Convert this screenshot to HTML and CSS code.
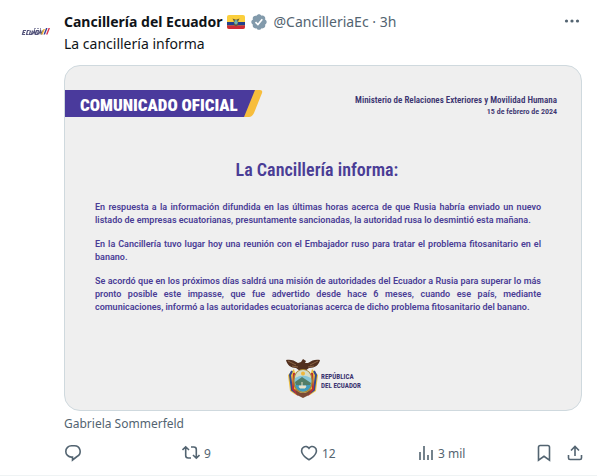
FILE: index.html
```html
<!DOCTYPE html>
<html lang="es">
<head>
<meta charset="utf-8">
<meta name="viewport" content="width=device-width, initial-scale=1">
<title>Cancillería del Ecuador</title>
<link rel="stylesheet" href="styles.css">
</head>
<body>
<article class="post">
  <a class="avatar" href="#" aria-label="Cancillería del Ecuador">
    <svg viewBox="0 0 38 38" width="38" height="38" aria-hidden="true">
      <g fill="none" stroke="#55557c" stroke-width="1.200">
        <path d="M8 22.500H5.500L6.500 18.500H9M6 20.500h2M12.500 18.500H10.500l-1 4h2M13.500 18.500l-1 4h2l1-4M15.500 22.500l2-4 .5 4M19.500 18.500l-1 4h2l1-4zM21.500 22.500l2-4 .5 4M24.500 22.500l1-4"/>
        <path d="M17 16.500h7" stroke-dasharray="2 1" opacity=".6"/>
      </g>
      <path d="M24 22.500l2.500-5.500H28l-2.500 5.500z" fill="#efb52f"/>
      <path d="M26.500 22.500l2.500-6.500h1.500L28 22.500z" fill="#3c3c92"/>
      <path d="M29 22.500l2.500-6.500H33l-2.500 6.500z" fill="#dc344d"/>
    </svg>
  </a>
  <div class="body">
    <header class="byline">
      <a class="name" href="#">Cancillería del Ecuador</a>
      <svg class="flag" viewBox="0 0 18 14" width="18" height="14" role="img" aria-label="Ecuador">
        <rect width="18" height="14" rx="2" fill="#fbcf3c"/>
        <path d="M0 7h18v3.500H0z" fill="#22408c"/>
        <path d="M0 10.500h18V12a2 2 0 0 1-2 2H2a2 2 0 0 1-2-2z" fill="#ce2b37"/>
        <path d="M5.500 3.500L9 4.700l3.500-1.200-1.300 2.700-.4 4L9 11.500l-1.800-1.300-.4-4z" fill="#665b3a"/>
        <ellipse cx="9" cy="7.300" rx="1.700" ry="2.300" fill="#70b6b4"/>
      </svg>
      <svg class="verified" viewBox="0 0 22 22" width="18" height="18" role="img" aria-label="Cuenta verificada">
        <path fill="#829aab" d="M20.400 11c0-1.400-.8-2.600-2-3.200.5-1.300.2-2.700-.7-3.600-1-1-2.400-1.200-3.600-.8C13.500 2.200 12.300 1.500 11 1.500S8.500 2.200 7.900 3.400c-1.300-.4-2.600-.1-3.600.8s-1.200 2.300-.7 3.600C2.400 8.400 1.600 9.600 1.600 11s.8 2.600 2 3.200c-.5 1.300-.3 2.600.7 3.600 1 1 2.300 1.200 3.600.8.600 1.200 1.800 1.900 3.100 1.900s2.500-.7 3.100-1.900c1.300.4 2.600.2 3.600-.8.900-1 1.200-2.300.7-3.600 1.200-.6 2-1.800 2-3.200z"/>
        <path d="M6.700 11.200l3 3 5.300-6.500" fill="none" stroke="#fff" stroke-width="2"/>
      </svg>
      <span class="meta"><a href="#">@CancilleriaEc</a> · <time>3h</time></span>
      <button class="icon-button more" type="button" aria-label="Más opciones">
        <svg viewBox="0 0 16 16" width="16" height="16" fill="#536471"><circle cx="2.500" cy="7" r="1.600"/><circle cx="8" cy="7" r="1.600"/><circle cx="13.500" cy="7" r="1.600"/></svg>
      </button>
    </header>
    <p class="message">La cancillería informa</p>
    <section class="release">
      <div class="release-head">
        <div class="banner">
          <svg class="banner-shape" viewBox="0 0 198 27" preserveAspectRatio="none" aria-hidden="true">
            <path d="M0 0h191l-11 27H0z" fill="#4a3a9c"/>
            <path d="M190 0h5q3 0 2 3l-8 20q-2 4-5 4h-5z" fill="#f7bd3c"/>
          </svg>
          <strong class="banner-text">COMUNICADO OFICIAL</strong>
        </div>
        <div class="issuer">
          <p class="ministry">Ministerio de Relaciones Exteriores y Movilidad Humana</p>
          <p class="date">15 de febrero de 2024</p>
        </div>
      </div>
      <h2 class="title">La Cancillería informa:</h2>
      <div class="copy">
        <p>En respuesta a la información difundida en las últimas horas acerca de que Rusia habría enviado un nuevo listado de empresas ecuatorianas, presuntamente sancionadas, la autoridad rusa lo desmintió esta mañana.</p>
        <p>En la Cancillería tuvo lugar hoy una reunión con el Embajador ruso para tratar el problema fitosanitario en el banano.</p>
        <p>Se acordó que en los próximos días saldrá una misión de autoridades del Ecuador a Rusia para superar lo más pronto posible este impasse, que fue advertido desde hace 6 meses, cuando ese país, mediante comunicaciones, informó a las autoridades ecuatorianas acerca de dicho problema fitosanitario del banano.</p>
      </div>
      <div class="seal">
        <svg viewBox="0 0 36 40" width="36" height="40" aria-hidden="true">
          <path d="M9 11L3 17l2 16 6 4 4-3zM27 11l6 6-2 16-6 4-4-3z" fill="#efc03c"/>
          <path d="M7 13l-2 4 2 15 4 3M29 13l2 4-2 15-4 3" fill="none" stroke="#334a91" stroke-width="2"/>
          <path d="M9 15L8 31l5 6M27 15l1 16-5 6" fill="none" stroke="#bc3036" stroke-width="2"/>
          <path d="M1 2c4-1 8 0 12 3l3-1 2-3 3 2-1 2 3 0c4-3 8-4 12-3-1 5-5 8-11 8l-4 3h-5l-4-3C6 10 2 7 1 2z" fill="#52301f"/>
          <path d="M3 3l8 4M33 3l-8 4M7 8l6 1M29 8l-6 1" stroke="#8c6545" stroke-width="1"/>
          <path d="M10 31q8 8 16 0l-2 6-6 3-6-3z" fill="#7b4935"/>
          <ellipse cx="18" cy="23" rx="10" ry="12" fill="#a88734"/>
          <ellipse cx="18" cy="23" rx="8.500" ry="10.500" fill="#86c5d8"/>
          <path d="M10 20q8-5 16 0-1-8-8-8t-8 8z" fill="#d4dcc8"/>
          <circle cx="18" cy="15.500" r="2" fill="#efb63c"/>
          <path d="M10 24l7-5 3 2 6 4-1 3H11z" fill="#517e68"/>
          <path d="M10 27h16q-2 6.500-8 6.500T10 27z" fill="#3f9bbc"/>
          <path d="M14 28h7l-1 2h-5zM17 24v4" fill="#e9e1c6" stroke="#e9e1c6"/>
        </svg>
        <p class="country">REPÚBLICA<br>DEL ECUADOR</p>
      </div>
    </section>
    <p class="credit">Gabriela Sommerfeld</p>
    <footer class="actions">
      <button class="icon-button" type="button" aria-label="Responder">
        <svg viewBox="0 0 18 18" width="18" height="18"><path d="M7.500 1.700h3a5.700 5.700 0 0 1 2.500 10.800L8.500 16v-2.900h-1a5.700 5.700 0 0 1 0-11.400z"/></svg>
      </button>
      <button class="icon-button" type="button" aria-label="Repostear, 9">
        <svg viewBox="1 0 18 18" width="18" height="18"><path d="M1.500 6l3.200-3.200L8 6M4.700 3v8.500q0 2.500 2.500 2.500H10M18.500 11l-3.200 3.200L12 11M15.300 14V5.500Q15.300 3 12.800 3H10"/></svg>
        <span>9</span>
      </button>
      <button class="icon-button" type="button" aria-label="Me gusta, 12">
        <svg viewBox="0 0 18 18" width="18" height="18"><path d="M9 4.300C7.700 2.500 5.400 1.900 3.600 3.200 1.700 4.500 1.200 6.800 2.100 9 3.200 11.700 5.700 13.800 9 15.700c3.300-1.900 5.800-4 6.900-6.700.9-2.200.4-4.500-1.500-5.800C12.600 1.900 10.300 2.500 9 4.300z"/></svg>
        <span>12</span>
      </button>
      <button class="icon-button" type="button" aria-label="3 mil visualizaciones">
        <svg viewBox="0 0 16 18" width="16" height="18"><path d="M2 16V8M6 16V2M10 16v-5M14 16V6"/></svg>
        <span>3 mil</span>
      </button>
      <div class="tools">
        <button class="icon-button" type="button" aria-label="Guardar">
          <svg viewBox="0 0 16 18" width="16" height="18"><path d="M2.500 3.200q0-1.700 1.700-1.700h7.600q1.700 0 1.700 1.700v12.900L8 12.300l-5.500 3.800z"/></svg>
        </button>
        <button class="icon-button" type="button" aria-label="Compartir">
          <svg viewBox="0 0 16 18" width="16" height="18"><path d="M8 12V2.800M4 6.500l4-4 4 4M1.500 11v3q0 1.500 1.500 1.500h10q1.500 0 1.500-1.500v-3"/></svg>
        </button>
      </div>
    </footer>
  </div>
</article>
</body>
</html>
```
FILE: styles.css
```css
* { box-sizing: border-box; }
body {
  margin: 0;
  background: #fff;
  color: #0f1419;
  font: 14px/22px "Noto Sans", "Open Sans", sans-serif;
}
p, h2 { margin: 0; }
a { color: inherit; text-decoration: none; }
svg { display: block; flex: none; }
.post {
  display: grid;
  grid-template-columns: 38px minmax(0, 1fr);
  gap: 9px;
  padding: 10px 15px 11px 17px;
  border-bottom: 1px solid #eff3f4;
}
.avatar { padding-top: 2px; }
.byline { display: flex; align-items: center; height: 23px; white-space: nowrap; }
.name { font-weight: 700; }
.flag { margin-left: 5px; }
.verified { margin: 0 5px; }
.meta, .credit { color: #536471; }
.more { margin-left: auto; padding-right: 2px; }
.message { margin-bottom: 10px; }

.release {
  padding: 24px 0 12px;
  border: 1px solid #cfd9de;
  border-radius: 16px;
  background: #efefef;
  color: #4a3d96;
  font-family: "Roboto Condensed", Roboto, sans-serif;
  font-weight: 700;
}
.release-head { display: flex; justify-content: space-between; padding-right: 24px; }
.banner { display: grid; grid-template-rows: 27px; width: 198px; }
.banner-shape, .banner-text { grid-area: 1 / 1; }
.banner-shape { width: 100%; height: 100%; }
.banner-text { padding-left: 15px; color: #fff; font-size: 17px; line-height: 30px; white-space: nowrap; z-index: 1; }
.issuer { padding-top: 4px; color: #3b3470; text-align: right; font-weight: 600; }
.ministry { font-size: 9px; line-height: 12px; }
.date { font-size: 8px; line-height: 12px; }
.title { margin-top: 40px; padding-right: 12px; font-size: 18px; font-weight: 600; line-height: 24px; text-align: center; }
.copy {
  display: grid;
  gap: 11px;
  margin: 19px 40px 0 30px;
  font: 600 9px/13px Roboto, sans-serif;
  text-align: justify;
}
.seal { display: flex; align-items: center; justify-content: center; margin-top: 44px; }
.country { padding-top: 8px; color: #3b3470; font-size: 7px; line-height: 9px; }

.credit { padding-top: 2px; font-size: 12px; }
.actions {
  display: grid;
  grid-template-columns: repeat(4, 118px) 1fr;
  margin-top: 7px;
  line-height: 20px;
}
.icon-button {
  display: flex;
  align-items: center;
  gap: 4px;
  padding: 0;
  border: 0;
  background: none;
  color: #536471;
  font: 12px/20px "Noto Sans", "Open Sans", sans-serif;
  cursor: pointer;
}
.icon-button.more { padding-right: 2px; }
.actions span { padding-top: 2px; }
.actions svg { fill: none; stroke: currentColor; stroke-width: 1.6; }
.tools { display: flex; justify-content: flex-end; gap: 15px; padding-right: 2px; }
```
